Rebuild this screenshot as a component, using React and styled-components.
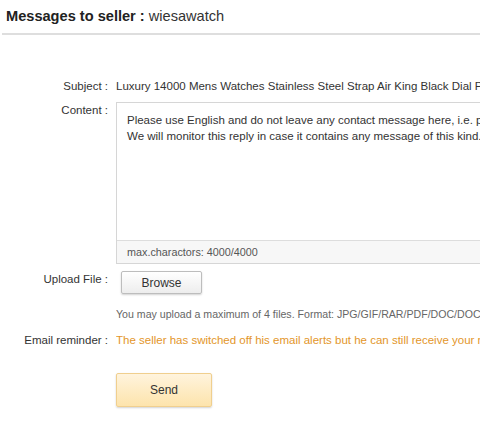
import React from "react";
import styled, { createGlobalStyle } from "styled-components";

const GlobalStyle = createGlobalStyle`
	html, body {
		margin: 0;
		padding: 0;
		background: #fff;
		overflow: hidden;
	}
	body {
		font-family: "Liberation Sans", Arial, sans-serif;
		font-size: 11.5px;
		color: #333;
	}
`;

const Page = styled.div`
	width: 480px;
	height: 430px;
	overflow: hidden;
`;

const Header = styled.h2`
	margin: 0 0 0 2px;
	padding: 8px 0 9px 4px;
	font-size: 14.6px;
	font-weight: bold;
	color: #222;
	border-bottom: 2px solid #dedede;
	white-space: nowrap;

	span {
		font-weight: normal;
		color: #333;
	}
`;

const Form = styled.div`
	padding-top: 45px;
	display: grid;
	grid-template-columns: 108px 1fr;
	column-gap: 8px;
`;

const Label = styled.div`
	text-align: right;
	white-space: nowrap;
	padding-top: ${(p) => p.$top || 0}px;
	margin-bottom: ${(p) => p.$bottom || 0}px;
`;

const Value = styled.div`
	white-space: nowrap;
	overflow: hidden;
	padding-top: ${(p) => p.$top || 0}px;
	margin-bottom: ${(p) => p.$bottom || 0}px;
	color: ${(p) => p.$color || "#333"};
`;

const Editor = styled.div`
	width: 400px;
	border: 1px solid #d6d6d6;
	margin-bottom: 5px;
`;

const TextArea = styled.div`
	height: 119px;
	padding: 9px 10px;
	line-height: 16px;
	white-space: nowrap;
	overflow: hidden;
	color: #333;
`;

const Counter = styled.div`
	height: 22px;
	line-height: 22px;
	padding-left: 10px;
	background: #f7f7f7;
	border-top: 1px solid #ddd;
	font-size: 10.8px;
	color: #555;
`;

const Button = styled.button`
	font-family: "Liberation Sans", Arial, sans-serif;
	cursor: pointer;
	display: block;
	width: ${(p) => p.$w}px;
	height: ${(p) => p.$h}px;
	margin: ${(p) => p.$top || 0}px 0 0 ${(p) => p.$left || 0}px;
	font-size: 12px;
	color: #333;
	border-radius: 2px;
	border: 1px solid ${(p) => (p.$primary ? "#f0cf8e" : "#bdbdbd")};
	background: ${(p) =>
		p.$primary
			? "linear-gradient(#fff4dd, #fde4ac)"
			: "linear-gradient(#ffffff, #ededed)"};
	box-shadow: 0 1px 2px rgba(0, 0, 0, 0.18);
`;

const Note = styled.div`
	grid-column: 2;
	font-size: 10.6px;
	color: #666;
	white-space: nowrap;
	overflow: hidden;
	padding-top: 14px;
	margin-bottom: 14px;
`;

const App = () => {
	return (
		<Page>
			<GlobalStyle />
			<Header>
				Messages to seller : <span>wiesawatch</span>
			</Header>
			<Form>
				<Label $bottom={10}>Subject :</Label>
				<Value $bottom={10}>
					Luxury 14000 Mens Watches Stainless Steel Strap Air King Black Dial
					Premium Quality
				</Value>

				<Label $top={2}>Content :</Label>
				<Editor>
					<TextArea>
						Please use English and do not leave any contact message here, i.e.
						phone number or email.
						<br />
						We will monitor this reply in case it contains any message of this
						kind.
					</TextArea>
					<Counter>max.charactors: 4000/4000</Counter>
				</Editor>

				<Label $top={4}>Upload File :</Label>
				<div>
					<Button $w={81} $h={23} $left={5} $top={2}>
						Browse
					</Button>
				</div>
				<Note>
					You may upload a maximum of 4 files. Format:
					JPG/GIF/RAR/PDF/DOC/DOCX/TXT. Max size 2MB each.
				</Note>

				<Label $bottom={27}>Email reminder :</Label>
				<Value $bottom={27} $color="#e3962a">
					The seller has switched off his email alerts but he can still receive
					your message.
				</Value>

				<div />
				<Button $primary $w={96} $h={34}>
					Send
				</Button>
			</Form>
		</Page>
	);
};

export default App;
